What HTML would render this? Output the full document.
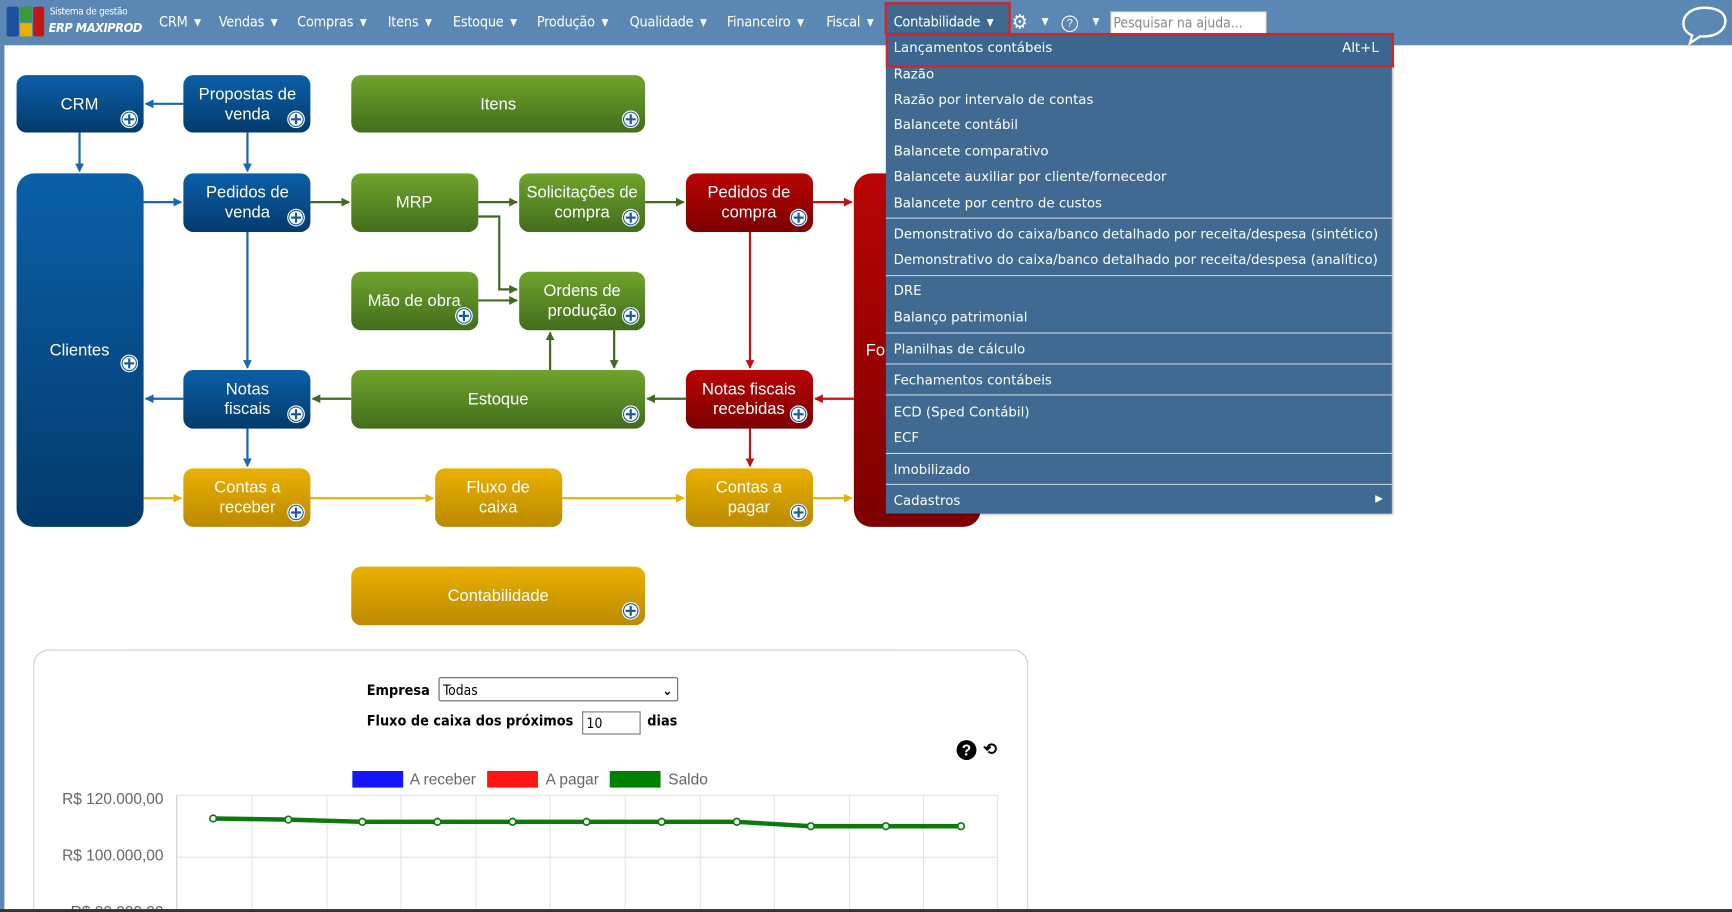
<!DOCTYPE html>
<html><head><meta charset="utf-8">
<style>
html,body{margin:0;padding:0;width:1732px;height:912px;overflow:hidden;background:#fff;font-family:"Liberation Sans",sans-serif}
#w{position:absolute;left:0;top:0;width:1568px;height:826px;overflow:hidden;transform:scale(1.10459);transform-origin:0 0;background:#fff}
#bar{position:absolute;left:0;top:0;width:1568px;height:41px;background:#5b87b4}
#lstrip{position:absolute;left:0;top:41px;width:4px;height:785px;background:#5b87b4}
.nav{position:absolute;top:13px;color:#fff;font-family:"DejaVu Sans Condensed","DejaVu Sans",sans-serif;font-size:13px;letter-spacing:-0.2px}
.tri{font-size:9px;margin-left:6px;vertical-align:1px}
#menu{position:absolute;left:802px;top:30px;width:458px;height:435px;background:#406a92;box-shadow:1px 1px 2px rgba(0,0,0,.3)}
.mi{position:absolute;left:7px;color:#fff;font-family:"DejaVu Sans",sans-serif;font-size:12.1px;white-space:nowrap}
.sep{position:absolute;left:0;width:458px;height:1px;background:#c8d4e0}
#panel{position:absolute;left:30px;top:588px;width:899px;height:236px;border:1px solid #ccc;border-bottom:none;border-radius:14px 14px 0 0}
</style></head><body><div id="w">
<div id="bar"></div><div id="lstrip"></div>
<div style="position:absolute;left:6px;top:6px;width:11px;height:27px;background:#1b4fa0;border-radius:2px"></div>
<div style="position:absolute;left:18px;top:6px;width:11px;height:14px;background:#3a9a3a"></div>
<div style="position:absolute;left:18px;top:21px;width:11px;height:12px;background:#e8b000"></div>
<div style="position:absolute;left:30px;top:6px;width:10px;height:27px;background:#c01818;border-radius:2px"></div>
<div style="position:absolute;left:45px;top:6px;color:#fff;font-family:'DejaVu Sans Condensed',sans-serif;font-size:9px;letter-spacing:-0.3px">Sistema de gestão</div>
<div style="position:absolute;left:44px;top:18px;color:#fff;font-family:'DejaVu Sans Condensed',sans-serif;font-size:11.5px;font-style:italic;font-weight:bold;letter-spacing:-0.4px">ERP MAXIPROD</div>
<div class="nav" style="left:144px">CRM<span class="tri">▼</span></div>
<div class="nav" style="left:198px">Vendas<span class="tri">▼</span></div>
<div class="nav" style="left:269px">Compras<span class="tri">▼</span></div>
<div class="nav" style="left:351px">Itens<span class="tri">▼</span></div>
<div class="nav" style="left:410px">Estoque<span class="tri">▼</span></div>
<div class="nav" style="left:486px">Produção<span class="tri">▼</span></div>
<div class="nav" style="left:570px">Qualidade<span class="tri">▼</span></div>
<div class="nav" style="left:658px">Financeiro<span class="tri">▼</span></div>
<div class="nav" style="left:748px">Fiscal<span class="tri">▼</span></div>
<div style="position:absolute;left:801px;top:2px;width:110px;height:27px;background:#3e6a92;border:2px solid #e02020;border-bottom:none"></div>
<div class="nav" style="left:809px">Contabilidade<span class="tri">▼</span></div>
<div class="nav" style="left:916px;top:10px;font-size:18px">⚙</div>
<div class="nav" style="left:943px;font-size:9px;top:15px">▼</div>
<div style="position:absolute;left:961px;top:14px;width:13px;height:13px;border:1.5px solid #fff;border-radius:50%;color:#fff;font-size:10px;text-align:center;line-height:13px">?</div>
<div class="nav" style="left:989px;font-size:9px;top:15px">▼</div>
<div style="position:absolute;left:1005px;top:10px;width:138px;height:20px;background:#fff;border:1px solid #aaa;font-family:'DejaVu Sans Condensed',sans-serif;font-size:12.5px;color:#888;line-height:20px;padding-left:2px">Pesquisar na ajuda...</div>
<svg style="position:absolute;left:1522px;top:5px" width="42" height="36" viewBox="0 0 42 36"><path d="M21 2C10 2 2 8 2 16c0 5 3 9 8 11l-2 7 9-6c1 0 3 0 4 0 11 0 19-6 19-14S32 2 21 2z" fill="none" stroke="#fff" stroke-width="2.2"/></svg>

<svg style="position:absolute;left:0;top:0" width="1568" height="580">
<defs>
<linearGradient id="gb" x1="0" y1="0" x2="0" y2="1"><stop offset="0" stop-color="#0b5fa8"/><stop offset="1" stop-color="#033a6c"/></linearGradient>
<linearGradient id="gg" x1="0" y1="0" x2="0" y2="1"><stop offset="0" stop-color="#6fa42c"/><stop offset="1" stop-color="#426d1c"/></linearGradient>
<linearGradient id="gr" x1="0" y1="0" x2="0" y2="1"><stop offset="0" stop-color="#b80404"/><stop offset="1" stop-color="#7c0000"/></linearGradient>
<linearGradient id="gy" x1="0" y1="0" x2="0" y2="1"><stop offset="0" stop-color="#eab000"/><stop offset="1" stop-color="#bb8a00"/></linearGradient>
<marker id="ab" markerWidth="8" markerHeight="8" refX="7" refY="4" orient="auto" markerUnits="userSpaceOnUse"><path d="M0,0L8,4L0,8z" fill="#1a66b0"/></marker>
<marker id="ag" markerWidth="8" markerHeight="8" refX="7" refY="4" orient="auto" markerUnits="userSpaceOnUse"><path d="M0,0L8,4L0,8z" fill="#3f6a1f"/></marker>
<marker id="ar" markerWidth="8" markerHeight="8" refX="7" refY="4" orient="auto" markerUnits="userSpaceOnUse"><path d="M0,0L8,4L0,8z" fill="#c41010"/></marker>
<marker id="ay" markerWidth="8" markerHeight="8" refX="7" refY="4" orient="auto" markerUnits="userSpaceOnUse"><path d="M0,0L8,4L0,8z" fill="#e8b000"/></marker>
<g id="pl"><circle r="8" fill="#fff"/><circle r="6.5" fill="none" stroke="#1a5aa0" stroke-width="1"/><path d="M-4.5 0H4.5M0 -4.5V4.5" stroke="#1a5aa0" stroke-width="2"/></g>
</defs>
<g stroke-width="2" fill="none">
<path d="M166 94H132" stroke="#1a66b0" marker-end="url(#ab)"/>
<path d="M72 120V155" stroke="#1a66b0" marker-end="url(#ab)"/>
<path d="M224 120V155" stroke="#1a66b0" marker-end="url(#ab)"/>
<path d="M130 183H164" stroke="#1a66b0" marker-end="url(#ab)"/>
<path d="M224 210V333" stroke="#1a66b0" marker-end="url(#ab)"/>
<path d="M166 361H132" stroke="#1a66b0" marker-end="url(#ab)"/>
<path d="M224 388V422" stroke="#1a66b0" marker-end="url(#ab)"/>
<path d="M281 183H316" stroke="#3f6a1f" marker-end="url(#ag)"/>
<path d="M433 183H468" stroke="#3f6a1f" marker-end="url(#ag)"/>
<path d="M584 183H619" stroke="#3f6a1f" marker-end="url(#ag)"/>
<path d="M433 196H452V262H468" stroke="#3f6a1f" marker-end="url(#ag)"/>
<path d="M433 272H468" stroke="#3f6a1f" marker-end="url(#ag)"/>
<path d="M498 335V301" stroke="#3f6a1f" marker-end="url(#ag)"/>
<path d="M556 299V333" stroke="#3f6a1f" marker-end="url(#ag)"/>
<path d="M318 361H283" stroke="#3f6a1f" marker-end="url(#ag)"/>
<path d="M621 361H586" stroke="#3f6a1f" marker-end="url(#ag)"/>
<path d="M736 183H771" stroke="#c41010" marker-end="url(#ar)"/>
<path d="M679 210V333" stroke="#c41010" marker-end="url(#ar)"/>
<path d="M773 361H738" stroke="#c41010" marker-end="url(#ar)"/>
<path d="M679 388V422" stroke="#c41010" marker-end="url(#ar)"/>
<path d="M130 451H164" stroke="#e8b000" marker-end="url(#ay)"/>
<path d="M281 451H392" stroke="#e8b000" marker-end="url(#ay)"/>
<path d="M509 451H619" stroke="#e8b000" marker-end="url(#ay)"/>
<path d="M736 451H771" stroke="#e8b000" marker-end="url(#ay)"/>
</g>
<g font-family="Liberation Sans,sans-serif" font-size="15" fill="#fff" text-anchor="middle">
<rect x="15" y="68" width="115" height="52" rx="9" fill="url(#gb)"/><text x="72" y="99">CRM</text><use href="#pl" x="117" y="108"/>
<rect x="166" y="68" width="115" height="52" rx="9" fill="url(#gb)"/><text x="224" y="90">Propostas de</text><text x="224" y="108">venda</text><use href="#pl" x="268" y="108"/>
<rect x="318" y="68" width="266" height="52" rx="9" fill="url(#gg)"/><text x="451" y="99">Itens</text><use href="#pl" x="571" y="108"/>
<rect x="15" y="157" width="115" height="320" rx="16" fill="url(#gb)"/><text x="72" y="322">Clientes</text><use href="#pl" x="117" y="329"/>
<rect x="166" y="157" width="115" height="53" rx="9" fill="url(#gb)"/><text x="224" y="179">Pedidos de</text><text x="224" y="197">venda</text><use href="#pl" x="268" y="197"/>
<rect x="318" y="157" width="115" height="53" rx="9" fill="url(#gg)"/><text x="375" y="188">MRP</text>
<rect x="470" y="157" width="114" height="53" rx="9" fill="url(#gg)"/><text x="527" y="179">Solicitações de</text><text x="527" y="197">compra</text><use href="#pl" x="571" y="197"/>
<rect x="621" y="157" width="115" height="53" rx="9" fill="url(#gr)"/><text x="678" y="179">Pedidos de</text><text x="678" y="197">compra</text><use href="#pl" x="723" y="197"/>
<rect x="773" y="157" width="115" height="320" rx="16" fill="url(#gr)"/><text x="830" y="322">Fornecedores</text>
<rect x="318" y="246" width="115" height="53" rx="9" fill="url(#gg)"/><text x="375" y="277">Mão de obra</text><use href="#pl" x="420" y="286"/>
<rect x="470" y="246" width="114" height="53" rx="9" fill="url(#gg)"/><text x="527" y="268">Ordens de</text><text x="527" y="286">produção</text><use href="#pl" x="571" y="286"/>
<rect x="166" y="335" width="115" height="53" rx="9" fill="url(#gb)"/><text x="224" y="357">Notas</text><text x="224" y="375">fiscais</text><use href="#pl" x="268" y="375"/>
<rect x="318" y="335" width="266" height="53" rx="9" fill="url(#gg)"/><text x="451" y="366">Estoque</text><use href="#pl" x="571" y="375"/>
<rect x="621" y="335" width="115" height="53" rx="9" fill="url(#gr)"/><text x="678" y="357">Notas fiscais</text><text x="678" y="375">recebidas</text><use href="#pl" x="723" y="375"/>
<rect x="166" y="424" width="115" height="53" rx="9" fill="url(#gy)"/><text x="224" y="446">Contas a</text><text x="224" y="464">receber</text><use href="#pl" x="268" y="464"/>
<rect x="394" y="424" width="115" height="53" rx="9" fill="url(#gy)"/><text x="451" y="446">Fluxo de</text><text x="451" y="464">caixa</text>
<rect x="621" y="424" width="115" height="53" rx="9" fill="url(#gy)"/><text x="678" y="446">Contas a</text><text x="678" y="464">pagar</text><use href="#pl" x="723" y="464"/>
<rect x="318" y="513" width="266" height="53" rx="9" fill="url(#gy)"/><text x="451" y="544">Contabilidade</text><use href="#pl" x="571" y="553"/>
</g>
</svg>

<div id="panel"></div>
<div style="position:absolute;left:332px;top:618px;font-family:'DejaVu Sans Condensed',sans-serif;font-size:13px;font-weight:bold">Empresa</div>
<div style="position:absolute;left:397px;top:613px;height:22px;border:1px solid #666;border-radius:2px;font-family:'DejaVu Sans Condensed',sans-serif;font-size:12.5px;line-height:22px;padding-left:3px;box-sizing:border-box;width:217px">Todas<span style="position:absolute;right:4px;font-weight:bold">⌄</span></div>
<div style="position:absolute;left:332px;top:646px;font-family:'DejaVu Sans Condensed',sans-serif;font-size:13px;font-weight:bold">Fluxo de caixa dos próximos</div>
<div style="position:absolute;left:527px;top:644px;width:53px;height:21px;border:1px solid #777;box-sizing:border-box;font-family:'DejaVu Sans Condensed',sans-serif;font-size:12.5px;line-height:19px;padding-left:3px">10</div>
<div style="position:absolute;left:586px;top:646px;font-family:'DejaVu Sans Condensed',sans-serif;font-size:13px;font-weight:bold">dias</div>
<div style="position:absolute;left:866px;top:670px;width:18px;height:18px;border-radius:50%;background:#000;color:#fff;font-weight:bold;font-size:14px;text-align:center;line-height:18px">?</div>
<div style="position:absolute;left:890px;top:669px;font-size:15px;font-weight:bold">⟲</div>
<svg style="position:absolute;left:0;top:0;pointer-events:none" width="1568" height="826">
<rect x="319" y="698" width="46" height="15" fill="#1414ff"/><text x="371" y="710" font-size="14" fill="#666" font-family="Liberation Sans">A receber</text>
<rect x="441" y="698" width="46" height="15" fill="#ff1414"/><text x="494" y="710" font-size="14" fill="#666" font-family="Liberation Sans">A pagar</text>
<rect x="552" y="698" width="46" height="15" fill="#008000"/><text x="605" y="710" font-size="14" fill="#666" font-family="Liberation Sans">Saldo</text>
<g stroke="#e3e3e3" stroke-width="1">
<path d="M160 720H903M160 776H903"/>
<path d="M228 720V826M296 720V826M363 720V826M431 720V826M498 720V826M566 720V826M634 720V826M701 720V826M769 720V826M836 720V826M903 720V826"/>
</g>
<path d="M160 720V826" stroke="#ccc"/>
<g font-family="Liberation Sans" font-size="14" fill="#666" text-anchor="end">
<text x="148" y="728">R$ 120.000,00</text><text x="148" y="779">R$ 100.000,00</text><text x="148" y="830">R$ 80.000,00</text></g>
<polyline points="193,741 261,742 328,744 396,744 464,744 531,744 599,744 667,744 734,748 802,748 870,748" fill="none" stroke="#0a7a0a" stroke-width="4"/>
<g fill="#fff" stroke="#0a7a0a" stroke-width="1.5">
<circle cx="193" cy="741" r="3"/><circle cx="261" cy="742" r="3"/><circle cx="328" cy="744" r="3"/><circle cx="396" cy="744" r="3"/><circle cx="464" cy="744" r="3"/><circle cx="531" cy="744" r="3"/><circle cx="599" cy="744" r="3"/><circle cx="667" cy="744" r="3"/><circle cx="734" cy="748" r="3"/><circle cx="802" cy="748" r="3"/><circle cx="870" cy="748" r="3"/></g>
</svg>

<div id="menu">
<div style="position:absolute;left:0;top:0;width:456px;height:27px;border:2px solid #e02020;background:#3c6690"></div>
<div class="mi" style="top:6px">Lançamentos contábeis</div><div class="mi" style="top:6px;left:413px">Alt+L</div>
<div class="mi" style="top:30px">Razão</div>
<div class="mi" style="top:53px">Razão por intervalo de contas</div>
<div class="mi" style="top:76px">Balancete contábil</div>
<div class="mi" style="top:100px">Balancete comparativo</div>
<div class="mi" style="top:123px">Balancete auxiliar por cliente/fornecedor</div>
<div class="mi" style="top:147px">Balancete por centro de custos</div>
<div class="sep" style="top:167px"></div>
<div class="mi" style="top:175px">Demonstrativo do caixa/banco detalhado por receita/despesa (sintético)</div>
<div class="mi" style="top:198px">Demonstrativo do caixa/banco detalhado por receita/despesa (analítico)</div>
<div class="sep" style="top:219px"></div>
<div class="mi" style="top:226px">DRE</div>
<div class="mi" style="top:250px">Balanço patrimonial</div>
<div class="sep" style="top:271px"></div>
<div class="mi" style="top:279px">Planilhas de cálculo</div>
<div class="sep" style="top:299px"></div>
<div class="mi" style="top:307px">Fechamentos contábeis</div>
<div class="sep" style="top:327px"></div>
<div class="mi" style="top:336px">ECD (Sped Contábil)</div>
<div class="mi" style="top:359px">ECF</div>
<div class="sep" style="top:380px"></div>
<div class="mi" style="top:388px">Imobilizado</div>
<div class="sep" style="top:408px"></div>
<div class="mi" style="top:416px">Cadastros</div><div class="mi" style="top:417px;left:443px;font-size:9px">▶</div>
</div>
<div style="position:absolute;left:0;top:823px;width:1568px;height:3px;background:#333"></div>
</div></body></html>
